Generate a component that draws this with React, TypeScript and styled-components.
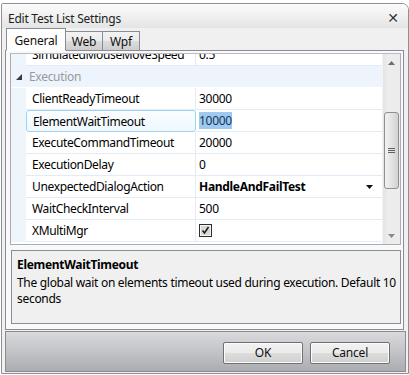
import React from "react";
import styled, { createGlobalStyle } from "styled-components";

const Global = createGlobalStyle`
  html, body { margin: 0; padding: 0; background: #ffffff; }
  body { font-family: "Noto Sans", "Open Sans", sans-serif; font-size: 12px; color: #000; }
  * { box-sizing: border-box; }
`;

const FONT = `"Noto Sans", "Open Sans", sans-serif`;

const Window = styled.div`
  margin: 3px 0 0 1px;
  width: 408px;
  height: 371px;
  border: 1px solid #8d9094;
  border-top-right-radius: 7px;
  border-top-left-radius: 2px;
  background: #f0f0f0;
  display: flex;
  flex-direction: column;
  overflow: hidden;
`;

const TitleBar = styled.div`
  height: 24px;
  flex: none;
  display: flex;
  align-items: center;
  justify-content: space-between;
  padding: 0 9px 0 6px;
  background: linear-gradient(#fbfbfb, #eeeeee 60%, #e4e4e4);
`;

const Title = styled.span`
  font-family: ${FONT};
  font-size: 12px;
  letter-spacing: -0.25px;
  color: #1e1e1e;
  padding-top: 5px;
`;

const Close = styled.span`
  font-family: "DejaVu Sans", sans-serif;
  font-weight: bold;
  font-size: 14px;
  color: #333;
  text-shadow: 0 0 2px #fff, 0 0 2px #fff;
  padding-top: 4px;
`;

const Client = styled.div`
  flex: 1;
  display: flex;
  flex-direction: column;
  padding: 0 2px 0 2px;
`;

const TabStrip = styled.div`
  height: 22px;
  flex: none;
  display: flex;
  align-items: flex-end;
  padding-left: 1px;
  margin: 0 1px 0 1px;
  position: relative;
  z-index: 1;
`;

const Tab = styled.div<{ $active?: boolean }>`
  font-family: ${FONT};
  font-size: 12px;
  letter-spacing: -0.2px;
  display: flex;
  align-items: center;
  justify-content: center;
  border: 1px solid #898c95;
  border-bottom: ${(p) => (p.$active ? "1px solid #ffffff" : "none")};
  margin-left: -1px;
  margin-bottom: ${(p) => (p.$active ? "-1px" : "0")};
  height: ${(p) => (p.$active ? "23px" : "19px")};
  padding: ${(p) => (p.$active ? "1px 0 0" : "1px 0 0")};
  width: ${(p) => (p.$active ? "60px" : "38px")};
  background: ${(p) =>
    p.$active ? "#ffffff" : "linear-gradient(#f3f3f3, #ebebeb 50%, #dddddd 50%, #cdcdcd)"};
  color: #111;
  &:first-child { margin-left: 0; }
`;

const Panel = styled.div`
  height: 280px;
  flex: none;
  margin: 0 2px 0 1px;
  border: 1px solid #898c95;
  background: #f9f9f9;
  padding: 2px 2px 5px 4px;
  display: flex;
  flex-direction: column;
`;

const Grid = styled.div`
  height: 192px;
  flex: none;
  border: 1px solid #a9acb3;
  border-top-color: #b8bbc1;
  background: #ffffff;
  display: flex;
  overflow: hidden;
`;

const Rows = styled.div`
  flex: 1;
  overflow: hidden;
`;

const RowsInner = styled.div`
  margin-top: -10px;
  display: flex;
  flex-direction: column;
`;

const Row = styled.div`
  height: 22px;
  display: grid;
  grid-template-columns: 15px 170px 1fr;
  background: #ffffff;
`;

const Gutter = styled.div`
  background: #eef5fb;
`;

const NameCell = styled.div<{ $selected?: boolean }>`
  font-family: ${FONT};
  font-size: 12px;
  letter-spacing: -0.35px;
  display: flex;
  align-items: center;
  padding-left: 6px;
  border-bottom: 1px solid #e2ecf6;
  border-right: 1px solid #e2ecf6;
  white-space: nowrap;
  overflow: hidden;
  ${(p) =>
    p.$selected
      ? `
    border: 1px solid #9fd2f3;
    border-radius: 3px;
    background: linear-gradient(#fbfdff, #eff8fe);
    padding-left: 6px;
  `
      : ""}
`;

const ValueCell = styled.div<{ $bold?: boolean }>`
  font-family: ${FONT};
  font-size: 12px;
  letter-spacing: -0.3px;
  font-weight: ${(p) => (p.$bold ? 700 : 400)};
  display: flex;
  align-items: center;
  justify-content: space-between;
  padding: 0 9px 0 3px;
  border-bottom: 1px solid #e2ecf6;
  white-space: nowrap;
`;

const Selection = styled.span`
  background: #9fcaef;
  color: #15365a;
`;

const CategoryRow = styled.div`
  height: 22px;
  display: flex;
  align-items: center;
  background: #edf4fb;
  padding-left: 5px;
  gap: 7px;
  font-family: ${FONT};
  font-size: 12px;
  letter-spacing: -0.3px;
  color: #979a9e;
  border-bottom: 1px solid #ffffff;
`;

const ScrollBar = styled.div`
  width: 18px;
  flex: none;
  background: linear-gradient(90deg, #e4e4e4, #ededed 30%, #ececec);
  border-left: 1px solid #f4f4f4;
  display: flex;
  flex-direction: column;
  align-items: center;
`;

const ScrollArrow = styled.div`
  height: 17px;
  flex: none;
  display: flex;
  align-items: center;
  justify-content: center;
`;

const ScrollTrack = styled.div`
  flex: 1;
  width: 100%;
  padding: 41px 1px 0 1px;
`;

const Thumb = styled.div`
  height: 77px;
  border: 1px solid #8e8f91;
  border-radius: 3px;
  background: linear-gradient(90deg, #f2f2f2, #e3e3e3 50%, #d2d2d2);
  display: flex;
  align-items: center;
  justify-content: center;
`;

const Splitter = styled.div`
  height: 5px;
  flex: none;
`;

const Description = styled.div`
  flex: 1;
  margin-left: 1px;
  border: 1px solid #8a8d92;
  background: #f0f0f0;
  padding: 6px 4px 0 5px;
  font-family: ${FONT};
  font-size: 12px;
  letter-spacing: -0.3px;
  line-height: 16px;
`;

const DescTitle = styled.div`
  font-weight: 700;
  margin-bottom: 2px;
`;

const ButtonBar = styled.div`
  height: 41px;
  flex: none;
  margin: 1px 0 2px 1px;
  border: 1px solid #8a8c91;
  background: linear-gradient(#d9d9dc, #c3c4c8 50%, #aaacb0);
  display: flex;
  justify-content: flex-end;
  align-items: flex-start;
  gap: 7px;
  padding: 10px 15px 0 0;
`;

const Button = styled.button`
  width: 80px;
  height: 22px;
  border: 1px solid #707070;
  border-radius: 2px;
  background: linear-gradient(#f2f2f2, #ebebeb 50%, #dddddd 50%, #cfcfcf);
  box-shadow: inset 0 0 0 1px #fbfbfb;
  font-family: ${FONT};
  font-size: 12px;
  letter-spacing: -0.2px;
  color: #111;
  padding: 0 0 1px;
`;

const Check = () => (
  <svg width="13" height="13" viewBox="0 0 13 13">
    <rect x="0.5" y="0.5" width="12" height="12" fill="#f4f4f4" stroke="#2f2f2f" />
    <rect x="2" y="2" width="9" height="9" fill="#d9d9d9" />
    <path d="M3.5 6.5 L5.5 9 L9.5 3" fill="none" stroke="#222" strokeWidth="1.6" />
  </svg>
);

const DownTri = () => (
  <svg width="7" height="4" viewBox="0 0 7 4">
    <path d="M0 0 H7 L3.5 4 Z" fill="#111" />
  </svg>
);

const Expander = () => (
  <svg width="6" height="6" viewBox="0 0 6 6">
    <path d="M6 0 V6 H0 Z" fill="#3a3a3a" />
  </svg>
);

const ArrowUp = () => (
  <svg width="7" height="4" viewBox="0 0 7 4">
    <path d="M0 4 H7 L3.5 0 Z" fill="#6e6e6e" />
  </svg>
);

const ArrowDown = () => (
  <svg width="7" height="4" viewBox="0 0 7 4">
    <path d="M0 0 H7 L3.5 4 Z" fill="#8a8a8a" />
  </svg>
);

const Grip = () => (
  <svg width="7" height="7" viewBox="0 0 7 7">
    <path d="M0 1.5 H7 M0 3.5 H7 M0 5.5 H7" stroke="#606060" strokeWidth="1" />
  </svg>
);

type Prop = { name: string; value: React.ReactNode; bold?: boolean; selected?: boolean };

const props: Prop[] = [
  { name: "ClientReadyTimeout", value: "30000" },
  { name: "ElementWaitTimeout", value: <Selection>10000</Selection>, selected: true },
  { name: "ExecuteCommandTimeout", value: "20000" },
  { name: "ExecutionDelay", value: "0" },
  {
    name: "UnexpectedDialogAction",
    value: (
      <>
        <span>HandleAndFailTest</span>
        <DownTri />
      </>
    ),
    bold: true,
  },
  { name: "WaitCheckInterval", value: "500" },
  { name: "XMultiMgr", value: <Check /> },
];

export default function App() {
  return (
    <>
      <Global />
      <Window>
        <TitleBar>
          <Title>Edit Test List Settings</Title>
          <Close>✕</Close>
        </TitleBar>
        <Client>
          <TabStrip>
            <Tab $active>General</Tab>
            <Tab>Web</Tab>
            <Tab>Wpf</Tab>
          </TabStrip>
          <Panel>
            <Grid>
              <Rows>
                <RowsInner>
                  <Row>
                    <Gutter />
                    <NameCell>SimulatedMouseMoveSpeed</NameCell>
                    <ValueCell>0.5</ValueCell>
                  </Row>
                  <CategoryRow>
                    <Expander />
                    Execution
                  </CategoryRow>
                  {props.map((p) => (
                    <Row key={p.name}>
                      <Gutter />
                      <NameCell $selected={p.selected}>{p.name}</NameCell>
                      <ValueCell $bold={p.bold}>{p.value}</ValueCell>
                    </Row>
                  ))}
                </RowsInner>
              </Rows>
              <ScrollBar>
                <ScrollArrow>
                  <ArrowUp />
                </ScrollArrow>
                <ScrollTrack>
                  <Thumb>
                    <Grip />
                  </Thumb>
                </ScrollTrack>
                <ScrollArrow>
                  <ArrowDown />
                </ScrollArrow>
              </ScrollBar>
            </Grid>
            <Splitter />
            <Description>
              <DescTitle>ElementWaitTimeout</DescTitle>
              The global wait on elements timeout used during execution. Default 10 seconds
            </Description>
          </Panel>
          <ButtonBar>
            <Button>OK</Button>
            <Button>Cancel</Button>
          </ButtonBar>
        </Client>
      </Window>
    </>
  );
}
